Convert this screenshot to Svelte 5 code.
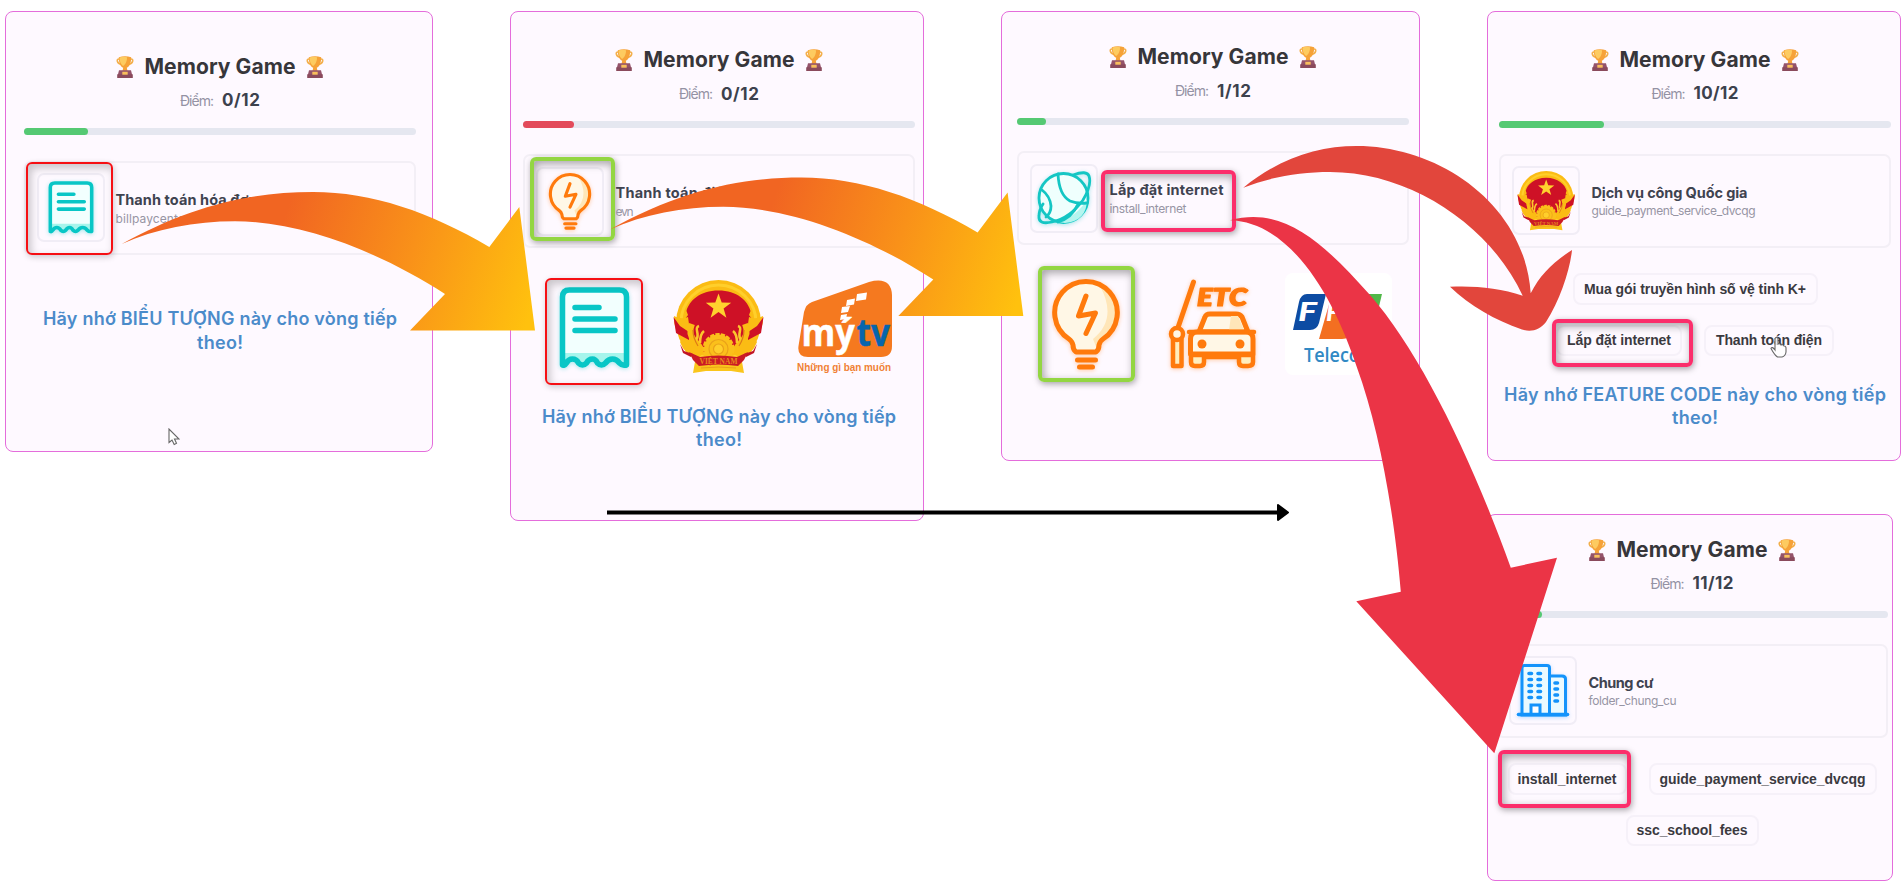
<script>
  const remember = 'Hãy nhớ BIỂU TƯỢNG này cho vòng tiếp';

  const first = {
    cls: 'p1', score: '0/12', scoreW: 38, fill: 64, tone: 'green', icon: 'receipt', frame: 'red',
    title: 'Thanh toán hóa đơn', titleW: 142, code: 'billpaycenter', codeW: 74,
    message: remember, messageW: 354, pointer: true
  };
  const second = {
    cls: 'p2', score: '0/12', scoreW: 38, fill: 51, tone: 'rose', icon: 'bulb', frame: 'lime',
    title: 'Thanh toán điện', titleW: 118, code: 'evn', codeW: 18,
    pictures: ['receipt', 'emblem', 'mytv'], message: remember, messageW: 354
  };
  const third = {
    cls: 'p3', score: '1/12', scoreW: 34, fill: 29, tone: 'green', icon: 'planet', textFrame: true,
    title: 'Lắp đặt internet', titleW: 114, code: 'install_internet', codeW: 77,
    pictures: ['bulb', 'etc', 'fpt']
  };
  const fourth = {
    cls: 'p4', score: '10/12', scoreW: 45, fill: 104.5, tone: 'green', icon: 'emblem',
    title: 'Dịch vụ công Quốc gia', titleW: 156, code: 'guide_payment_service_dvcqg', codeW: 164,
    rows: [
      [{ t: 'Mua gói truyền hình số vệ tinh K+', w: 222, box: 245 }],
      [{ t: 'Lắp đặt internet', w: 104, box: 126, pick: 'pick-a' }, { t: 'Thanh toán điện', w: 106, box: 130, hand: true }]
    ],
    message: 'Hãy nhớ FEATURE CODE này cho vòng tiếp', messageW: 382
  };
  const fifth = {
    cls: 'p5', score: '11/12', scoreW: 41, fill: 46, tone: 'green', icon: 'building',
    title: 'Chung cư', titleW: 65, code: 'folder_chung_cu', codeW: 88,
    rows: [
      [{ t: 'install_internet', w: 99, box: 119, pick: 'pick-b' }, { t: 'guide_payment_service_dvcqg', w: 206, box: 228 }],
      [{ t: 'ssc_school_fees', w: 111, box: 133 }]
    ]
  };

  // Spreads a label's letters so that it takes the given width.
  function fit(node, width) {
    const gap = (width - node.getBoundingClientRect().width) / (node.textContent.length - 1);
    node.style.letterSpacing = `${gap}px`;
    node.style.marginRight = `${-gap}px`;
  }
</script>

{#snippet trophy()}
  <svg class="trophy" width="18" height="22" viewBox="0 0 18 22">
    <path d="M3.500 3C-.2 2.500 .8 7.500 5.500 8.500M14.500 3c3.700-.5 2.700 4.500-2 5.500" fill="none" stroke="#f3b04c" stroke-width="1.600" />
    <path d="M2.800 1.200Q9-.8 15.200 1.200C15.200 7 13.500 10.500 10.800 11.800L11.500 15h-5l.7-3.200C4.500 10.500 2.800 7 2.800 1.200Z" fill="#f6a238" />
    <path d="M3.500 1.500Q8 0 11 1.300C11 6 9 9 7 10 4.500 8 3.500 5 3.500 1.500Z" fill="#fdcb60" />
    <path d="M3 14.300h12l1.200 4.700H1.800Z" fill="#95536a" />
    <path d="M1.200 18.300h15.600V22H1.200z" fill="#8a4a5c" />
    <path d="M6.300 15.800h5.400v2.900H6.300z" fill="#f9bf5c" />
  </svg>
{/snippet}

{#snippet receipt(w, h)}
  <svg class="glow teal" width={w} height={h} viewBox="0 0 70 82">
    <path d="M3 78V10Q3 3 10 3H60Q67 3 67 10V78Q63 78 60 74 57 71 53 71 49 71 46 75 44 78 42 78 40 78 38 75 36 71 33 71 29 71 27 75 25 78 23 78 21 78 19 75 17 71 13 71 9 71 7 76 5 78 3 78Z" fill="#f2fffe" />
    <path d="M4 66H66V76L60 73 53 70 44 77 35 71 24 77 15 70 4 77Z" fill="#a6f5ec" />
    <path d="M3 78V10Q3 3 10 3H60Q67 3 67 10V78Q63 79 60 76 57 72 53 72 49 72 46 76 44 78 42 78 40 78 38 76 36 72 33 72 29 72 27 76 25 78 23 78 21 78 19 76 17 72 13 72 9 72 7 76 5 79 3 78Z" fill="none" stroke="#08c6c6" stroke-width="5.500" stroke-linejoin="round" />
    <path d="M15.500 20.500h24M15.500 32h40M15.500 43.500h40" stroke="#08c6c6" stroke-width="5.500" stroke-linecap="round" />
  </svg>
{/snippet}

{#snippet bulb(w, h)}
  <svg class="glow amber" width={w} height={h} viewBox="0 0 68 91">
    <path d="M22 72Q20 63 17 60A31.300 31.300 0 1 1 51 60Q48 63 46 72Z" fill="#fff7e6" />
    <path d="M48 7A31 31 0 0 1 49 60Q47 62 45 70L41 60Q66 40 48 7Z" fill="#ffe6b8" />
    <path d="M24 73Q21 71 21 66 20 62 17 60A31.300 31.300 0 1 1 51 60Q48 62 47 66 47 71 44 73Z" fill="none" stroke="#ff7a0c" stroke-width="5" stroke-linejoin="round" />
    <path d="M34 17L26.500 37 43.500 34 34 54.500" fill="none" stroke="#ff7a0c" stroke-width="5" stroke-linecap="round" stroke-linejoin="round" />
    <path d="M25.500 81h18M27.500 88h13" stroke="#ff7a0c" stroke-width="5" stroke-linecap="round" />
  </svg>
{/snippet}

{#snippet emblem(w, h)}
  <svg width={w} height={h} viewBox="0 0 92 94">
    <path d="M23 76L20 93 33 91H58L71 93 68 76Z" fill="#fac51c" />
    <circle cx="45.500" cy="42.500" r="42.500" fill="#fbbc14" />
    <circle cx="45.500" cy="42.500" r="37.500" fill="none" stroke="#ffcf2b" stroke-width="3" />
    <path d="M45.500 10.500C64 10.500 75 21 77.500 31L76 35 79 39 74 46 66 72H25L17 46 12 39 15 35 13.500 31C16 21 27 10.500 45.500 10.500Z" fill="#ce1126" />
    <path d="M45.500 13.500l3.200 9 9.500.2-7.600 5.800 2.800 9.200-7.900-5.600-7.900 5.600 2.800-9.200-7.600-5.800 9.500-.2Z" fill="#ffd22e" />
    <path d="M1 36Q8 40 15 37L18 58 30 74 24 78Q11 74 7 62L10 58Q0 50 1 36ZM90 36Q83 40 76 37L73 58 61 74 67 78Q80 74 84 62L81 58Q91 50 90 36Z" fill="#fbbc14" />
    <path d="M.5 37L7 46 16 52 16 60 3 53ZM90.500 37L84 46 75 52 75 60 88 53Z" fill="#ce1126" />
    <path d="M7 64L11 71 20 74 18 77 10 73ZM84 64L80 71 71 74 73 77 81 73Z" fill="#c21525" />
    <path d="M19 44Q15 54 21 60T30 72M72 44Q76 54 70 60T61 72" fill="none" stroke="#fbbc14" stroke-width="6" />
    <path d="M26 46C20 48 28 54 23 60M65 46C71 48 63 54 68 60M31 51Q27 54 27 63M60 51Q64 54 64 63" fill="none" stroke="#fbc62d" stroke-width="2.600" />
    <path d="M20 50Q20 58 25 66M71 50Q71 58 66 66" fill="none" stroke="#dd7a17" stroke-width="1.200" />
    <circle cx="45.500" cy="69" r="14.500" fill="#fbc01b" stroke="#fbc01b" stroke-width="3" stroke-dasharray="4.200 1.200" />
    <circle cx="45.500" cy="69" r="9.500" fill="none" stroke="#eaa21a" stroke-width="1.200" />
    <circle cx="45.500" cy="69" r="5" fill="#ffcf2b" stroke="#eaa21a" stroke-width="1.200" />
    <path d="M16 72L27 77Q45 74 64 77L75 72 71 80 65 86Q45 83 26 86L20 80Z" fill="#cb1a25" />
    <text x="45.500" y="84" text-anchor="middle" font-family="Liberation Serif, serif" font-weight="700" font-size="7.500" fill="#e8881b">VIỆT NAM</text>
    <path d="M28 88Q45 86 63 88" fill="none" stroke="#eaa21a" stroke-width="1" />
  </svg>
{/snippet}

{#snippet mytv()}
  <svg width="96" height="94" viewBox="0 0 96 94">
    <path d="M15 22L72 2Q94-4 95 15V66Q95 77 84 77H11Q0 77 1.500 66L7 32Q9 24 15 22Z" fill="#f5791f" />
    <path d="M60 14l10-1.500-1 7-10 1.500zM50 20l8-1.500-1 6-8 1.500zM45 27l8-1-2 6-7 1zM44 35l6-1-1 5-6 1z" fill="#fff" />
    <text transform="translate(4.500 66) scale(.93 1)" font-family="Open Sans, sans-serif" font-weight="700" font-size="37" fill="#fff" stroke="#fff" stroke-width=".5">mý</text>
    <text transform="translate(59.500 66) scale(.9 1)" font-family="Open Sans, sans-serif" font-weight="700" font-size="37" fill="#0765ad" stroke="#0765ad" stroke-width=".5">tv</text>
    <text x="0" y="91" textLength="94" lengthAdjust="spacingAndGlyphs" font-family="Liberation Sans, sans-serif" font-weight="700" font-size="10" fill="#f08034">Những gì bạn muốn</text>
  </svg>
{/snippet}

{#snippet planet()}
  <svg class="glow teal" width="54" height="54" viewBox="0 0 54 54" fill="none" stroke="#14c6c4" stroke-width="2.800" stroke-linecap="round" stroke-linejoin="round">
    <circle cx="26.500" cy="27" r="24.500" fill="#effffd" />
    <path d="M21 51Q42 44 50 28 50 50 28 52Z" fill="#b5f5ef" stroke="none" />
    <path d="M36 4Q50-1 52 5 55 14 46 29 33 47 15 51 1 54 2 45 2 39 6 33" />
    <path d="M21 3Q22 24 33 30 40 33 50 32M5 19Q13 25 14 35 14 42 9 46M21 51Q35 47 41 33" />
  </svg>
{/snippet}

{#snippet building()}
  <svg class="glow blue" width="52" height="53" viewBox="0 0 52 53">
    <path d="M5 51V4Q5 1.500 7.500 1.500H30Q32.500 1.500 32.500 4V12H45Q48.500 12 48.500 15V51Z" fill="#eafaff" stroke="#1393fb" stroke-width="3" />
    <path d="M32.500 12V51" stroke="#1393fb" stroke-width="3" />
    <path d="M12 9.500h2.500M21 9.500h2.500M12 15.500h2.500M21 15.500h2.500M12 21.500h2.500M21 21.500h2.500M12 27.500h2.500M21 27.500h2.500M12 33.500h2.500M21 33.500h2.500M38 19h2.500M38 25h2.500M38 31h2.500M38 37h2.500" stroke="#1393fb" stroke-width="3.600" stroke-linecap="round" />
    <path d="M14 50V41h9v9" fill="#fff" stroke="#1393fb" stroke-width="3" />
    <path d="M1.500 50.500h49" stroke="#1393fb" stroke-width="3.600" stroke-linecap="round" />
  </svg>
{/snippet}

{#snippet etc()}
  <svg class="glow amber" width="87" height="90" viewBox="0 0 87 90" stroke="#ff7a0c" stroke-width="5" stroke-linecap="round" stroke-linejoin="round">
    <path d="M8.500 50L24.500 3" fill="none" />
    <path d="M4 60h8.500v27H4z" fill="#ffedbd" stroke-width="4.500" />
    <circle cx="8" cy="55" r="6" fill="#fff7e6" stroke-width="4.500" />
    <path d="M30 53L36 38Q37 35 41 35H67Q71 35 73 38L79 53Z" fill="#fff7e6" />
    <path d="M62 37H69L75 51H60Z" fill="#ffe6b8" stroke="none" />
    <path d="M21.500 75V60Q21.500 53 28 53H77Q84 53 84 60V75Z" fill="#fff7e6" />
    <path d="M22 76V83Q22 87 26 87H31Q35 87 35 83V78H70V83Q70 87 74 87H79Q84 87 84 83V76Z" fill="#ffedbd" stroke-width="4.500" />
    <path d="M20 53h65" stroke-width="4.500" />
    <circle cx="33" cy="65" r="4.500" fill="#ff7a0c" stroke="none" />
    <circle cx="71" cy="65" r="4.500" fill="#ff7a0c" stroke="none" />
    <text x="28" y="26.500" textLength="50" lengthAdjust="spacingAndGlyphs" font-family="Lato, sans-serif" font-style="italic" font-weight="800" font-size="25" fill="#ff7a0c" stroke-width="1.200">ETC</text>
  </svg>
{/snippet}

{#snippet fpt()}
  <svg width="107" height="102" viewBox="0 0 107 102">
    <rect width="107" height="102" rx="8" fill="#fff" />
    <path d="M19 21H41L34 50Q32 57 25 57H8L14 29Q16 21 22 21Z" fill="#0d4ca3" />
    <path d="M47 21H72Q78 21 76 29L68 57Q65 66 57 66H34Z" fill="#f36f21" />
    <path d="M76 21H97L91 46Q88 57 80 57H68Z" fill="#50b848" />
    <text x="13" y="48" font-family="Lato, sans-serif" font-style="italic" font-weight="900" font-size="26" textLength="19" lengthAdjust="spacingAndGlyphs" fill="#fff">F</text>
    <text x="41" y="48" font-family="Lato, sans-serif" font-style="italic" font-weight="900" font-size="26" fill="#fff">P</text>
    <text x="72" y="48" font-family="Lato, sans-serif" font-style="italic" font-weight="900" font-size="26" fill="#fff">T</text>
    <text x="19" y="89" textLength="73" lengthAdjust="spacingAndGlyphs" font-family="Open Sans, sans-serif" font-weight="600" font-size="20" fill="#3089c4">Telecom</text>
  </svg>
{/snippet}

{#snippet panel(p)}
  <section class="panel {p.cls}">
    <header>
      {@render trophy()}
      <h2><span use:fit={151}>Memory Game</span></h2>
      {@render trophy()}
    </header>
    <div class="score"><span class="label" use:fit={34}>Điểm:</span><strong use:fit={p.scoreW}>{p.score}</strong></div>
    <div class="bar"><div class="fill {p.tone}" style:width="{p.fill}px"></div></div>
    <div class="card">
      <div class="icon">
        {#if p.icon === 'receipt'}{@render receipt(46, 53)}
        {:else if p.icon === 'bulb'}{@render bulb(44, 57)}
        {:else if p.icon === 'planet'}{@render planet()}
        {:else if p.icon === 'emblem'}{@render emblem(59, 60)}
        {:else}{@render building()}{/if}
        {#if p.frame}<i class="frame {p.frame} over-icon"></i>{/if}
      </div>
      <div class="text">
        <b><span use:fit={p.titleW}>{p.title}</span></b>
        <small><span use:fit={p.codeW}>{p.code}</span></small>
        {#if p.textFrame}<i class="frame pink over-text"></i>{/if}
      </div>
    </div>
    {#if p.pictures}
      <div class="pictures">
        {#each p.pictures as pic, i}
          <div class="picture">
            {#if pic === 'receipt'}{@render receipt(71, 82)}
            {:else if pic === 'bulb'}{@render bulb(68, 91)}
            {:else if pic === 'emblem'}{@render emblem(92, 94)}
            {:else if pic === 'mytv'}{@render mytv()}
            {:else if pic === 'etc'}{@render etc()}
            {:else}{@render fpt()}{/if}
            {#if i === 0}<i class="frame {pic === 'bulb' ? 'lime' : 'red'} over-all"></i>{/if}
          </div>
        {/each}
      </div>
    {/if}
    {#if p.rows}
      <div class="choices">
        {#each p.rows as row}
          <div class="row">
            {#each row as c}
              <div class="choice" style:width="{c.box}px">
                <span use:fit={c.w}>{c.t}</span>
                {#if c.pick}<i class="frame pink {c.pick}"></i>{/if}
                {#if c.hand}
                  <svg class="hand" width="17" height="22" viewBox="0 0 17 22"><path d="M5 11V2.500Q6.500 0 8 2.500V8Q10 7 11 9 13 8 14 10 16 10 16 12V16Q15.500 20 12 21H7.500Q4.500 19 1 12.500 2 10 5 14Z" fill="#fff" fill-opacity=".85" stroke="#666" stroke-width="1.100" /></svg>
                {/if}
              </div>
            {/each}
          </div>
        {/each}
      </div>
    {/if}
    {#if p.message}
      <p class="message"><span use:fit={p.messageW}>{p.message}</span><br /><span use:fit={46}>theo!</span></p>
    {/if}
    {#if p.pointer}
      <svg class="pointer" width="12" height="18" viewBox="0 0 12 18"><path d="M1 1V14.500L4 12 6.200 16.500 8.500 15.300 6.500 11H11Z" fill="#fff" stroke="#666" stroke-width="1.100" /></svg>
    {/if}
  </section>
{/snippet}

<main>
  {@render panel(first)}
  {@render panel(second)}
  {@render panel(third)}
  <div class="column">
    {@render panel(fourth)}
    {@render panel(fifth)}
  </div>

  <svg class="arrows" width="1901" height="889" viewBox="0 0 1901 889">
    <defs>
      <linearGradient id="sun" gradientUnits="userSpaceOnUse" x1="285" y1="215" x2="535" y2="300">
        <stop offset="0" stop-color="#f16522" />
        <stop offset=".5" stop-color="#f99119" />
        <stop offset="1" stop-color="#ffc10e" />
      </linearGradient>
      <path id="swoop" d="M121.700 244C190 206 250 192 313 192C372 192 430 212 489.300 247L519.300 207 535 330.600H410L445 294C385 255 305 221.300 235 221.300C195 221.300 155 229 121.700 244Z" fill="url(#sun)" />
    </defs>
    <use href="#swoop" />
    <use href="#swoop" x="488.300" y="-14.500" />
    <path d="M607 512.500H1280" stroke="#000" stroke-width="4" />
    <path d="M1278 505L1288 512.500 1278 520Z" stroke="#000" stroke-width="2" stroke-linejoin="round" />
    <path d="M1243.300 187.700C1280 158 1318 146 1356.700 146C1440 146 1525 205 1530.700 293.300C1540 275 1553 262 1572 250C1570 270 1560 300 1546 322C1540 330 1531 332.500 1522 329.500C1495 320 1470 306 1450 286.700C1475 285.500 1500 288 1522.700 295.700C1490 225 1410 172 1330 172C1300 172 1270 177 1243.300 187.700Z" fill="#e2463c" />
    <path d="M1230 220.300C1285 205 1325 245 1370 295C1420 352 1470 455 1510.800 567.700L1557 557.700 1494.300 753.300 1356.300 601.300 1400.800 591.700C1395 520 1380 430 1356.700 366.700C1333 295 1290 222 1230 220.300Z" fill="#eb3446" />
  </svg>
</main>

<style>
  :global(body) { background: #fff; overflow: hidden; }
  main {
    position: relative; box-sizing: border-box; width: 1901px; height: 889px; padding: 11px 0 0 5px;
    display: flex; align-items: flex-start; overflow: hidden;
    font-family: Inter, "Noto Sans", sans-serif; color: #3b3f49;
  }
  .panel {
    box-sizing: border-box; flex: none; display: flex; flex-direction: column; align-items: flex-start;
    border: 1px solid #e46ddb; border-radius: 8px; background: #fef9ff;
  }
  .p1 { width: 428px; height: 441px; padding: 43.500px 0 0 18px; }
  .p2 { width: 414px; height: 510px; margin-left: 77px; padding: 37px 0 0 12px; }
  .p3 { width: 419px; height: 450px; margin-left: 77px; padding: 34px 0 0 15px; }
  .column { flex: none; display: flex; flex-direction: column; gap: 53px; margin-left: 67px; }
  .p4 { width: 414px; height: 450px; padding: 36.500px 0 0 11px; }
  .p5 { width: 406px; height: 367px; padding: 23.500px 0 0 8px; }

  header, .score, .bar, .card, .pictures, .choices, .message { width: 392px; box-sizing: border-box; }
  span, strong { display: inline-block; white-space: nowrap; }
  header { height: 22px; display: flex; justify-content: center; align-items: center; gap: 10px; }
  .trophy { flex: none; display: block; }
  h2 { margin: 0; font-size: 21px; line-height: 22px; font-weight: 650; color: #37363a; }
  .score { height: 24px; margin-top: 10.500px; display: flex; justify-content: center; align-items: center; gap: 8px; }
  .label { font-size: 14px; color: #9492a4; }
  strong { font-size: 17px; font-weight: 700; color: #3c414d; }
  .bar { height: 7px; margin-top: 15.500px; border-radius: 4px; background: #e5e7f0; }
  .fill { height: 7px; border-radius: 4px; }
  .green { background: #55c973; }
  .rose { background: #e34b5b; }
  .card { height: 94px; margin-top: 26px; padding-left: 11px; border: 2px solid #f3eff6; border-radius: 7px; display: flex; align-items: center; gap: 11.500px; }
  .icon { position: relative; flex: none; box-sizing: border-box; width: 68px; height: 69px; border: 2px solid #f1edf6; border-radius: 7px; display: flex; align-items: center; justify-content: center; }
  .text { position: relative; padding-top: 3px; }
  .p1 .text { left: -1px; padding-top: 4px; }
  b, small { display: block; line-height: 18.500px; }
  b { font-size: 14.500px; font-weight: 650; color: #3f4350; }
  small { font-size: 12px; color: #9795a4; }

  .glow { overflow: visible; }
  .teal { filter: drop-shadow(0 1px 2px rgba(10, 198, 198, .35)); }
  .amber { filter: drop-shadow(0 1px 2px rgba(255, 122, 12, .35)); }
  .blue { filter: drop-shadow(0 1px 2px rgba(19, 147, 251, .3)); }

  .pictures { display: flex; align-items: center; }
  .picture { position: relative; flex: none; display: flex; align-items: center; justify-content: center; }
  .p2 .pictures { height: 107px; margin-top: 30px; padding-left: 22px; }
  .p2 .picture:nth-child(1) { width: 98px; height: 107px; padding-bottom: 7px; box-sizing: border-box; }
  .p2 .picture:nth-child(2) { margin: 0 0 10px 29.500px; }
  .p2 .picture:nth-child(3) { margin: 0 0 10px 32.500px; }
  .p3 .pictures { height: 116px; margin-top: 21px; padding-left: 20.500px; }
  .p3 .picture:nth-child(1) { width: 97px; height: 116px; }
  .p3 .picture:nth-child(2) { margin-left: 34px; }
  .p3 .picture:nth-child(3) { margin-left: 29px; }

  .choices { display: flex; flex-direction: column; gap: 20px; margin-top: 25.500px; }
  .row { display: flex; justify-content: center; gap: 22px; }
  .choice { position: relative; flex: none; box-sizing: border-box; height: 31.500px; border: 2px solid #f6f1f9; border-radius: 8px; display: flex; align-items: center; justify-content: center; font: 700 14px "Liberation Sans", Arial, sans-serif; color: #3b3a3f; }

  .message { margin: 0; text-align: center; font-size: 18px; font-weight: 600; line-height: 23.700px; color: #4b8bca; }
  .p1 .message { margin-top: 52.500px; }
  .p2 .message { margin-top: 19.500px; }
  .p4 .message { margin-top: 26.500px; }
  .pointer { margin: 74px 0 0 143.500px; }
  .hand { position: absolute; left: 64px; top: 9px; }

  .frame { position: absolute; box-sizing: border-box; border-radius: 6px; }
  .red { border: 2px solid #f60f14; box-shadow: 1px 2px 6px rgba(0, 0, 0, .2), inset 3px 4px 8px rgba(0, 0, 0, .22); }
  .lime { border: 4px solid #93d642; box-shadow: 1px 2px 6px rgba(0, 0, 0, .35), inset 2px 3px 8px rgba(0, 0, 0, .35); }
  .pink { border: 4px solid #fb2e6b; box-shadow: 1px 2px 6px rgba(0, 0, 0, .35), inset 2px 3px 8px rgba(0, 0, 0, .35); }
  .p1 .over-icon { left: -13px; top: -13px; width: 87px; height: 93px; }
  .p2 .over-icon { left: -8px; top: -12px; width: 85px; height: 84px; }
  .over-all { inset: 0; }
  .over-text { left: -9px; top: -8.500px; width: 135px; height: 62px; }
  .pick-a { left: -6px; top: -8px; width: 141px; height: 48px; }
  .pick-b { left: -12px; top: -15px; width: 133px; height: 58px; }
  .arrows { position: absolute; left: 0; top: 0; pointer-events: none; }
</style>
